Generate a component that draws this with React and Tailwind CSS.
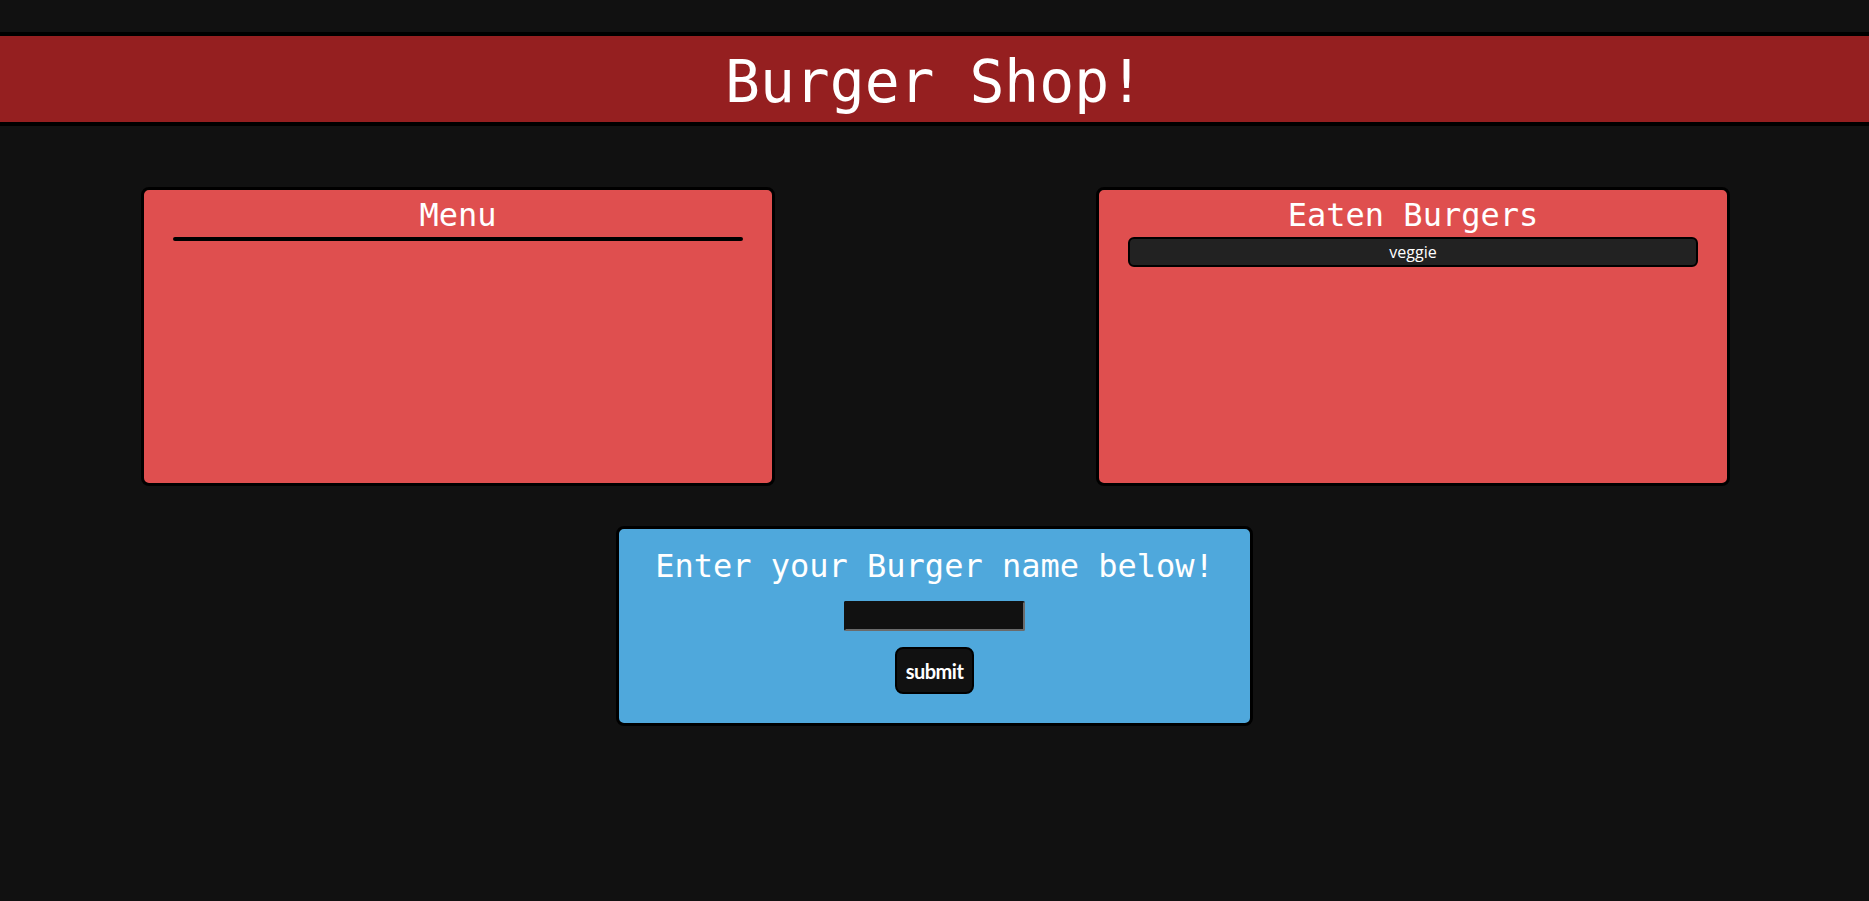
import React from 'react';

const mono = { fontFamily: '"DejaVu Sans Mono", "Liberation Mono", monospace' };

function BurgerList({ items }) {
  return (
    <div className="border-2 border-black rounded-md bg-[#222] mx-[29px] mt-[2px]">
      {items.map(b => (
        <div
          key={b}
          className="h-[26px] flex items-center justify-center text-[16px] text-white"
          style={{ fontFamily: '"Open Sans", "Liberation Sans", sans-serif' }}
        >
          {b}
        </div>
      ))}
    </div>
  );
}

function Card({ title, items }) {
  return (
    <div className="w-[634px] h-[299px] bg-[#df4f4f] border-[3px] border-black rounded-lg pt-[5px]">
      <h2 className="text-center text-[32px] leading-[40px] text-white" style={mono}>
        {title}
      </h2>
      <BurgerList items={items} />
    </div>
  );
}

export default function App() {
  return (
    <div className="min-h-screen bg-[#111] pt-[32px]">
      {/* header */}
      <header className="h-[94px] bg-[#951f20] border-y-4 border-black flex items-center justify-center pt-[5px]">
        <h1 className="text-[58px] leading-none text-white" style={mono}>
          Burger Shop!
        </h1>
      </header>

      <div className="flex justify-between pl-[141px] pr-[139px] mt-[61px]">
        <Card title="Menu" items={[]} />
        <Card title="Eaten Burgers" items={['veggie']} />
      </div>

      <div className="flex justify-center mt-[40px]">
        <form
          className="w-[637px] h-[200px] bg-[#4fa8dc] border-[3px] border-black rounded-lg pt-[17px] flex flex-col items-center"
          onSubmit={e => e.preventDefault()}
        >
          <h3 className="text-[32px] leading-[40px] text-white" style={mono}>
            Enter your Burger name below!
          </h3>
          <input
            type="text"
            className="mt-[15px] w-[181px] h-[30px] bg-[#111] border-2 border-[#111] border-b-[#6b6b6b] border-r-[#6b6b6b] rounded-[2px] text-white px-1 outline-none"
          />
          <button
            type="submit"
            className="mt-[16px] w-[79px] h-[47px] bg-[#111] border-2 border-black rounded-lg text-white text-[20px] font-bold tracking-[-0.5px]"
            style={{ fontFamily: 'Lato, "Open Sans", sans-serif' }}
          >
            submit
          </button>
        </form>
      </div>
    </div>
  );
}
